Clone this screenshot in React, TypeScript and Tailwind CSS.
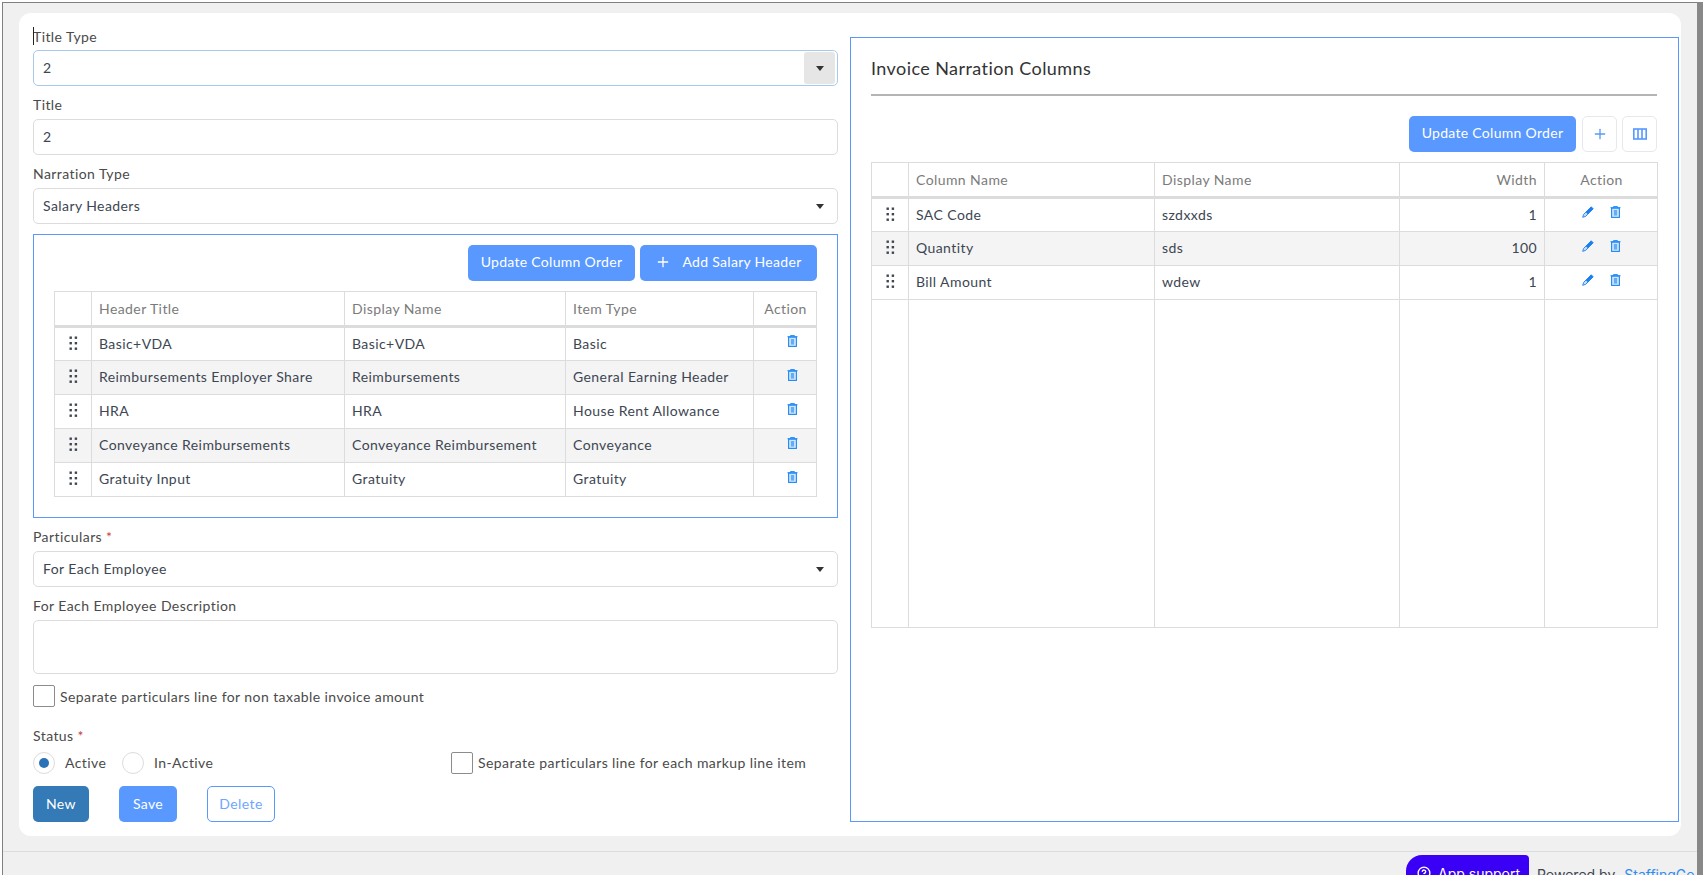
import { CircleHelp, Plus } from "lucide-react";

const salaryRows = [
  ["Basic+VDA", "Basic+VDA", "Basic"],
  ["Reimbursements Employer Share", "Reimbursements", "General Earning Header"],
  ["HRA", "HRA", "House Rent Allowance"],
  ["Conveyance Reimbursements", "Conveyance Reimbursement", "Conveyance"],
  ["Gratuity Input", "Gratuity", "Gratuity"],
];

const columnRows = [
  ["SAC Code", "szdxxds", "1"],
  ["Quantity", "sds", "100"],
  ["Bill Amount", "wdew", "1"],
];

function Grip() {
  return (
    <svg width="9" height="15" viewBox="0 0 9 15" className="mx-auto block" fill="#3f4650">
      <rect x="0.5" y="0.5" width="2.4" height="2.4" />
      <rect x="5.7" y="0.5" width="2.4" height="2.4" />
      <rect x="0.5" y="6" width="2.4" height="2.4" />
      <rect x="5.7" y="6" width="2.4" height="2.4" />
      <rect x="0.5" y="11.5" width="2.4" height="2.4" />
      <rect x="5.7" y="11.5" width="2.4" height="2.4" />
    </svg>
  );
}

function Trash() {
  return (
    <svg width="11" height="12" viewBox="0 0 11 12" className="block">
      <path d="M0.5 1.7h10M3.5 1.7V0.6h4v1.1" stroke="#1e88f5" strokeWidth="1" fill="none" />
      <rect x="1.6" y="2.2" width="7.8" height="9.2" stroke="#1e88f5" strokeWidth="1.1" fill="#cfe5fd" />
      <rect x="3.9" y="4" width="3.2" height="5.6" fill="#62adf8" />
    </svg>
  );
}

function Pencil() {
  return (
    <svg width="12" height="12" viewBox="0 0 12 12" className="block">
      <path d="M9.2 0.8l2 2-7.6 7.6-2.9 0.9 0.9-2.9z" fill="#c3dcfc" stroke="#1a7ff0" strokeWidth="0.9" strokeLinejoin="round" />
      <path d="M9.2 0.8l2 2-5.4 5.4-2-2z" fill="#1a7ff0" />
    </svg>
  );
}

function Caret() {
  return (
    <svg width="8" height="5" viewBox="0 0 8 5" className="block">
      <path d="M0 0h8L4 5z" fill="#333" />
    </svg>
  );
}

function SelectBox({ value, focused }: { value: string; focused?: boolean }) {
  return (
    <div
      className={`flex h-[36px] items-center justify-between rounded-[5px] border bg-white pl-[9px] pr-[2px] text-[#3d4652] ${
        focused ? "border-[#a9c9ea]" : "border-[#dcdcdc]"
      }`}
    >
      <span className="pb-[1px]">{value}</span>
      <span className={`flex h-[32px] w-[31px] items-center justify-center rounded-[3px] ${focused ? "bg-[#e6e6e6]" : ""}`}>
        <Caret />
      </span>
    </div>
  );
}

function BlueButton({ children, className }: { children: React.ReactNode; className?: string }) {
  return (
    <button className={`flex h-[36px] items-center justify-center rounded-[5px] bg-[#5898ff] pb-[3px] tracking-[0.3px] text-white ${className ?? ""}`}>
      {children}
    </button>
  );
}

function Required() {
  return <span className="text-[#c8413b]"> *</span>;
}

const th = "border border-[#dcdcdc] border-b-[3px] pb-[1px] pl-[7px] pr-[6px] font-normal text-[#7b7b7b]";
const td = "border border-[#dcdcdc] pb-[2px] pl-[7px] pr-[6px] text-[#3d4652]";

export default function App() {
  return (
    <div className="flex h-[875px] w-full overflow-hidden bg-white pl-[2px] pt-[2px] text-[14px] tracking-[0.42px] text-[#4a4a4a] [font-family:Lato,sans-serif]">
      <div className="flex min-w-0 flex-1 flex-col border-l border-t border-[#808080] bg-[#f0f0f0]">
        <div className="ml-[16px] mt-[10px] flex h-[823px] w-[1662px] gap-[12px] rounded-[12px] bg-white py-[14px] pl-[14px] pr-[2px]">
          <div className="flex w-[805px] flex-col">
            <label className="relative mb-[3px] h-[20px] leading-[20px]">
              <span className="absolute left-0 top-0 h-[18px] w-px bg-[#222]"></span>
              Title Type
            </label>
            <SelectBox value="2" focused />
            <label className="mb-[4px] mt-[9px] h-[20px] leading-[20px]">Title</label>
            <div className="flex h-[36px] items-center rounded-[5px] border border-[#dcdcdc] pb-[1px] pl-[9px] text-[#3d4652]">2</div>
            <label className="mb-[4px] mt-[9px] h-[20px] leading-[20px]">Narration Type</label>
            <SelectBox value="Salary Headers" />

            <div className="mt-[10px] h-[284px] border border-[#5898ff] pl-[20px] pr-[20px] pt-[10px]">
              <div className="flex justify-end gap-[5px]">
                <BlueButton className="w-[167px]">Update Column Order</BlueButton>
                <BlueButton className="w-[177px] gap-[11px]">
                  <Plus size={16} strokeWidth={2} />
                  Add Salary Header
                </BlueButton>
              </div>
              <table className="mt-[10px] w-[763px] table-fixed border-collapse">
                <colgroup>
                  <col className="w-[37px]" />
                  <col className="w-[253px]" />
                  <col className="w-[221px]" />
                  <col className="w-[188px]" />
                  <col className="w-[63px]" />
                </colgroup>
                <thead>
                  <tr className="h-[35px]">
                    <th className={th}></th>
                    <th className={`${th} text-left`}>Header Title</th>
                    <th className={`${th} text-left`}>Display Name</th>
                    <th className={`${th} text-left`}>Item Type</th>
                    <th className={`${th} text-center`}>Action</th>
                  </tr>
                </thead>
                <tbody>
                  {salaryRows.map((row, i) => (
                    <tr key={row[0]} className={`h-[34px] ${i % 2 === 1 ? "bg-[#f4f4f4]" : ""}`}>
                      <td className={td}>
                        <Grip />
                      </td>
                      {row.map((cell) => (
                        <td key={cell} className={`${td} truncate`}>
                          {cell}
                        </td>
                      ))}
                      <td className={td}>
                        <div className="mb-[4px] flex justify-center pl-[13px]">
                          <Trash />
                        </div>
                      </td>
                    </tr>
                  ))}
                </tbody>
              </table>
            </div>

            <label className="mb-[4px] mt-[9px] h-[20px] leading-[20px]">
              Particulars
              <Required />
            </label>
            <SelectBox value="For Each Employee" />
            <label className="mb-[4px] mt-[9px] h-[20px] leading-[20px]">For Each Employee Description</label>
            <div className="h-[54px] rounded-[5px] border border-[#dcdcdc]"></div>

            <div className="mt-[11px] flex h-[22px] items-center gap-[5px]">
              <span className="h-[22px] w-[22px] rounded-[2px] border border-[#8c8c8c]"></span>
              <span>Separate particulars line for non taxable invoice amount</span>
            </div>

            <label className="mt-[19px] h-[20px] leading-[20px]">
              Status
              <Required />
            </label>
            <div className="mt-[6px] flex h-[22px] items-center">
              <span className="flex h-[22px] w-[22px] items-center justify-center rounded-full border border-[#dcdcdc]">
                <span className="h-[10px] w-[10px] rounded-full bg-[#2a72b5]"></span>
              </span>
              <span className="ml-[10px] w-[57px] pb-[1px]">Active</span>
              <span className="h-[22px] w-[22px] rounded-full border border-[#dcdcdc]"></span>
              <span className="ml-[10px] w-[297px] pb-[1px]">In-Active</span>
              <span className="h-[22px] w-[22px] rounded-[2px] border border-[#8c8c8c]"></span>
              <span className="ml-[5px] pb-[1px]">Separate particulars line for each markup line item</span>
            </div>

            <div className="mt-[12px] flex">
              <button className="h-[36px] w-[56px] rounded-[5px] bg-[#337ab7] pb-[2px] text-white">New</button>
              <BlueButton className="ml-[30px] w-[58px] !pb-[1px]">Save</BlueButton>
              <button className="ml-[30px] h-[36px] w-[68px] rounded-[5px] border border-[#5898ff] pb-[2px] text-[#6ea6ff]">Delete</button>
            </div>
          </div>

          <div className="mt-[10px] flex w-[829px] flex-col border border-[#5898ff] pl-[20px] pr-[21px]">
            <h2 className="mt-[19px] h-[22px] text-[18px] leading-[22px] text-[#333]">Invoice Narration Columns</h2>
            <div className="mt-[15px] h-[2px] bg-[#b4b4b4]"></div>
            <div className="mt-[20px] flex justify-end">
              <BlueButton className="w-[167px]">Update Column Order</BlueButton>
              <button className="ml-[6px] flex h-[36px] w-[35px] items-center justify-center rounded-[5px] border border-[#e6e8ee] text-[#5898ff]">
                <Plus size={16} strokeWidth={2} />
              </button>
              <button className="ml-[5px] flex h-[36px] w-[35px] items-center justify-center rounded-[5px] border border-[#e6e8ee]">
                <svg width="14" height="12" viewBox="0 0 14 12" fill="none" stroke="#5898ff" strokeWidth="1.6">
                  <rect x="0.8" y="1" width="12.4" height="10" />
                  <path d="M5 1v10M9 1v10" />
                </svg>
              </button>
            </div>
            <table className="mt-[10px] w-[786px] table-fixed border-collapse">
              <colgroup>
                <col className="w-[37px]" />
                <col className="w-[246px]" />
                <col className="w-[245px]" />
                <col className="w-[145px]" />
                <col className="w-[113px]" />
              </colgroup>
              <thead>
                <tr className="h-[35px]">
                  <th className={th}></th>
                  <th className={`${th} text-left`}>Column Name</th>
                  <th className={`${th} text-left`}>Display Name</th>
                  <th className={`${th} !pr-[7px] text-right`}>Width</th>
                  <th className={`${th} text-center`}>Action</th>
                </tr>
              </thead>
              <tbody>
                {columnRows.map((row, i) => (
                  <tr key={row[0]} className={`h-[34px] ${i % 2 === 1 ? "bg-[#f4f4f4]" : ""}`}>
                    <td className={td}>
                      <Grip />
                    </td>
                    <td className={td}>{row[0]}</td>
                    <td className={td}>{row[1]}</td>
                    <td className={`${td} !pr-[7px] text-right`}>{row[2]}</td>
                    <td className={td}>
                      <div className="mb-[4px] flex justify-center gap-[16px]">
                        <Pencil />
                        <Trash />
                      </div>
                    </td>
                  </tr>
                ))}
                <tr className="h-[328px]">
                  <td className={td}></td>
                  <td className={td}></td>
                  <td className={td}></td>
                  <td className={td}></td>
                  <td className={td}></td>
                </tr>
              </tbody>
            </table>
          </div>
        </div>

        <div className="mt-[15px] flex h-[30px] items-start border-t border-[#dcdcdc] pl-[1403px] pt-[3px] tracking-normal [font-family:Inter,sans-serif]">
          <span className="flex h-[36px] w-[123px] shrink-0 items-center gap-[7px] rounded-tl-[16px] rounded-tr-[4px] bg-[#3a00f5] pl-[11px] text-white">
            <CircleHelp size={14} strokeWidth={2.4} />
            App support
          </span>
          <span className="ml-[8px] mt-[9px] shrink-0 text-[#3d4652]">Powered by</span>
          <span className="ml-[9px] mt-[9px] shrink-0 text-[#2f8cf0]">StaffingGo</span>
        </div>
      </div>
      <div className="h-full w-[6px] shrink-0 bg-[#888888]"></div>
    </div>
  );
}
